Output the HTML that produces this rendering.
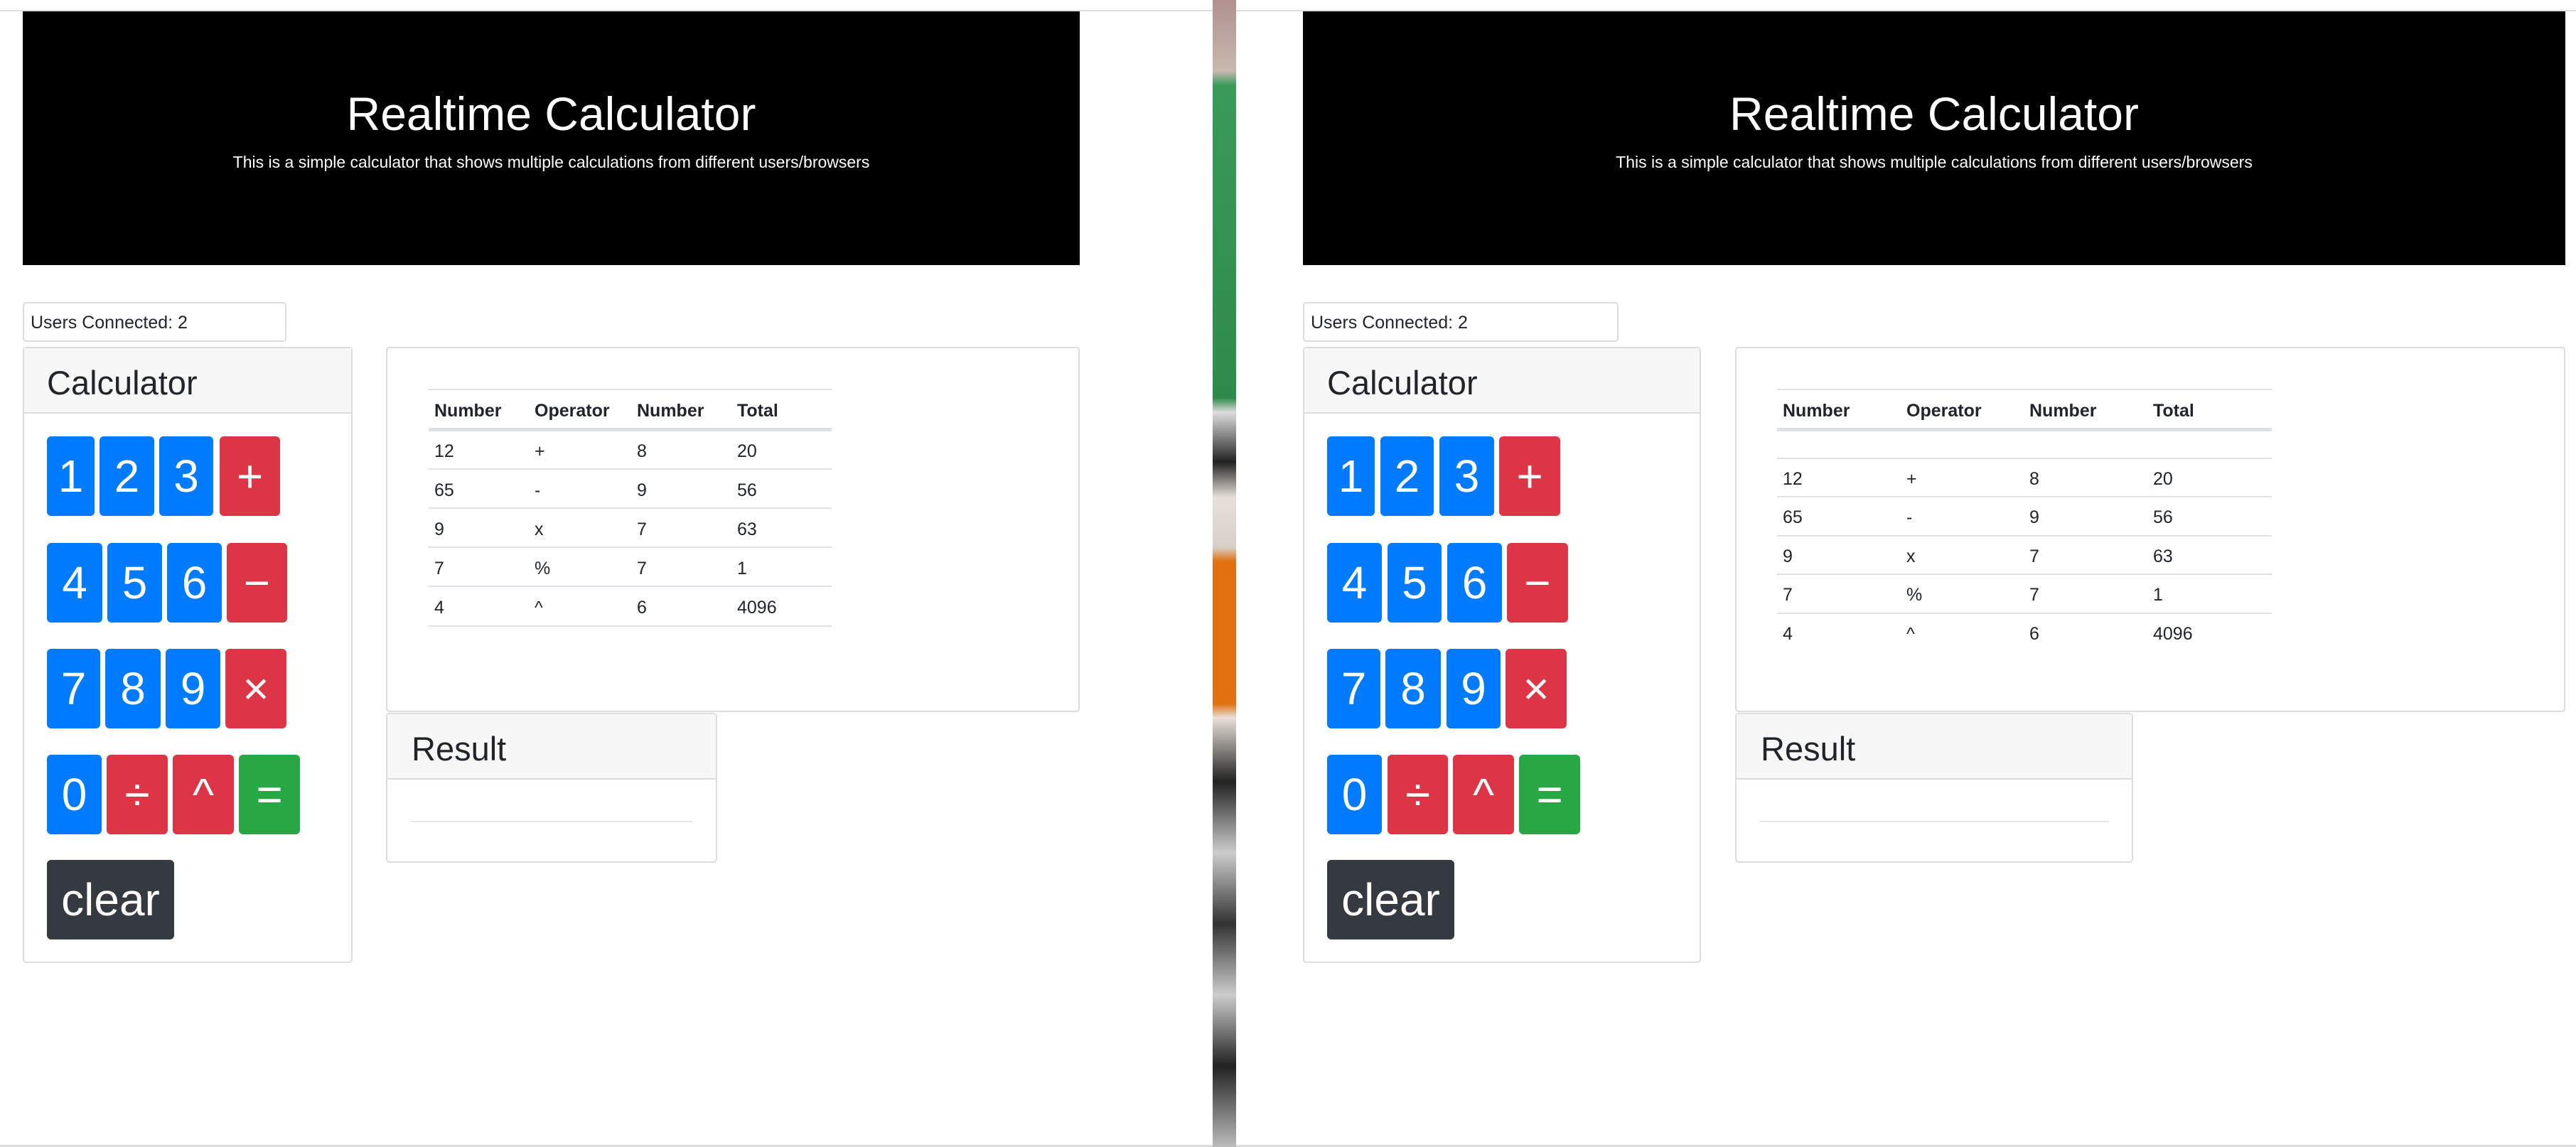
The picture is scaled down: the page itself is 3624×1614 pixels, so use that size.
<!DOCTYPE html>
<html><head><meta charset="utf-8"><style>
*{box-sizing:border-box;margin:0;padding:0}
body{width:3624px;height:1614px;position:relative;overflow:hidden;background:#fff;font-family:"Liberation Sans",sans-serif;color:#212529}
.a{position:absolute}
.jb{position:absolute;top:16px;height:357px;background:#000;color:#fff;text-align:center}
.jb h1{position:absolute;left:0;right:0;top:104px;font-size:66px;font-weight:normal;line-height:80px}
.jb p{position:absolute;left:0;right:0;top:196px;font-size:23px;line-height:32px}
.uc{position:absolute;top:425px;height:56px;border:2px solid #ddd;border-radius:5px;font-size:25px;line-height:54px;padding-left:9px}
.card{position:absolute;border:2px solid #dcdcdc;border-radius:5px;background:#fff}
.hd{position:absolute;left:0;right:0;top:0;height:92px;background:#f7f7f7;border-bottom:2px solid #dcdcdc;font-size:47px;line-height:98px}
.b{position:absolute;color:#fff;border-radius:6px;text-align:center;font-size:64px;line-height:112px;height:112px}
.bl{background:#007bff}.rd{background:#dc3545}.gr{background:#28a745}.dk{background:#343a40}
.ln{position:absolute;height:2px;background:#dee2e6}
.t{position:absolute;font-size:25px;line-height:30px;margin-top:2px}
.th{font-weight:bold}
</style></head><body>
<div class="a" style="left:0;top:14px;width:1706px;height:2px;background:#ddd"></div>
<div class="a" style="left:1739px;top:14px;width:1885px;height:2px;background:#ddd"></div>
<div class="a" style="left:0;top:1611px;width:3624px;height:3px;background:#ddd"></div>
<div class="a" style="left:1706px;top:0;width:33px;height:1614px;background:linear-gradient(#b09090 0px,#c8b8b0 100px,#3a9a5a 120px,#2e8a4a 560px,#ddd 580px,#222 650px,#e8e0d8 700px,#d8d0c8 770px,#e07010 790px,#e07010 990px,#e8e0d8 1010px,#222 1100px,#ccc 1200px,#333 1300px,#ccc 1400px,#222 1500px,#bbb 1614px)"></div>

<!-- LEFT -->
<div class="jb" style="left:32px;width:1487px"><h1>Realtime Calculator</h1><p>This is a simple calculator that shows multiple calculations from different users/browsers</p></div>
<div class="uc" style="left:32px;width:371px">Users Connected: 2</div>
<div class="card" style="left:32px;top:488px;width:464px;height:867px"><div class="hd" style="padding-left:32px">Calculator</div></div>
<div class="b bl" style="left:66px;top:614px;width:67px">1</div>
<div class="b bl" style="left:140px;top:614px;width:77px">2</div>
<div class="b bl" style="left:224px;top:614px;width:76px">3</div>
<div class="b rd" style="left:309px;top:614px;width:85px">+</div>
<div class="b bl" style="left:66px;top:764px;width:78px">4</div>
<div class="b bl" style="left:151px;top:764px;width:77px">5</div>
<div class="b bl" style="left:235px;top:764px;width:77px">6</div>
<div class="b rd" style="left:319px;top:764px;width:85px">−</div>
<div class="b bl" style="left:66px;top:913px;width:75px">7</div>
<div class="b bl" style="left:148px;top:913px;width:78px">8</div>
<div class="b bl" style="left:233px;top:913px;width:77px">9</div>
<div class="b rd" style="left:317px;top:913px;width:86px">×</div>
<div class="b bl" style="left:66px;top:1062px;width:77px">0</div>
<div class="b rd" style="left:150px;top:1062px;width:86px">÷</div>
<div class="b rd" style="left:243px;top:1062px;width:86px">^</div>
<div class="b gr" style="left:336px;top:1062px;width:86px">=</div>
<div class="b dk" style="left:66px;top:1210px;width:179px">clear</div>

<div class="card" style="left:543px;top:488px;width:976px;height:514px"></div>
<div class="ln" style="left:603px;top:547px;width:567px"></div>
<div class="ln" style="left:603px;top:602px;width:567px;height:5px"></div>
<div class="ln" style="left:603px;top:659px;width:567px"></div>
<div class="ln" style="left:603px;top:714px;width:567px"></div>
<div class="ln" style="left:603px;top:769px;width:567px"></div>
<div class="ln" style="left:603px;top:824px;width:567px"></div>
<div class="ln" style="left:603px;top:880px;width:567px"></div>
<div class="t th" style="left:611px;top:561px">Number</div><div class="t th" style="left:752px;top:561px">Operator</div><div class="t th" style="left:896px;top:561px">Number</div><div class="t th" style="left:1037px;top:561px">Total</div>
<div class="t" style="left:611px;top:618px">12</div><div class="t" style="left:752px;top:618px">+</div><div class="t" style="left:896px;top:618px">8</div><div class="t" style="left:1037px;top:618px">20</div>
<div class="t" style="left:611px;top:673px">65</div><div class="t" style="left:752px;top:673px">-</div><div class="t" style="left:896px;top:673px">9</div><div class="t" style="left:1037px;top:673px">56</div>
<div class="t" style="left:611px;top:728px">9</div><div class="t" style="left:752px;top:728px">x</div><div class="t" style="left:896px;top:728px">7</div><div class="t" style="left:1037px;top:728px">63</div>
<div class="t" style="left:611px;top:783px">7</div><div class="t" style="left:752px;top:783px">%</div><div class="t" style="left:896px;top:783px">7</div><div class="t" style="left:1037px;top:783px">1</div>
<div class="t" style="left:611px;top:838px">4</div><div class="t" style="left:752px;top:838px">^</div><div class="t" style="left:896px;top:838px">6</div><div class="t" style="left:1037px;top:838px">4096</div>

<div class="card" style="left:543px;top:1003px;width:466px;height:211px"><div class="hd" style="padding-left:34px">Result</div></div>
<div class="ln" style="left:578px;top:1155px;width:396px;background:#e8e8e8"></div>

<!-- RIGHT -->
<div class="jb" style="left:1833px;width:1776px"><h1>Realtime Calculator</h1><p>This is a simple calculator that shows multiple calculations from different users/browsers</p></div>
<div class="uc" style="left:1833px;width:444px">Users Connected: 2</div>
<div class="card" style="left:1833px;top:488px;width:560px;height:867px"><div class="hd" style="padding-left:32px">Calculator</div></div>
<div class="b bl" style="left:1867px;top:614px;width:67px">1</div>
<div class="b bl" style="left:1942px;top:614px;width:75px">2</div>
<div class="b bl" style="left:2025px;top:614px;width:77px">3</div>
<div class="b rd" style="left:2109px;top:614px;width:86px">+</div>
<div class="b bl" style="left:1867px;top:764px;width:77px">4</div>
<div class="b bl" style="left:1952px;top:764px;width:76px">5</div>
<div class="b bl" style="left:2036px;top:764px;width:77px">6</div>
<div class="b rd" style="left:2120px;top:764px;width:86px">−</div>
<div class="b bl" style="left:1867px;top:913px;width:75px">7</div>
<div class="b bl" style="left:1949px;top:913px;width:78px">8</div>
<div class="b bl" style="left:2035px;top:913px;width:76px">9</div>
<div class="b rd" style="left:2118px;top:913px;width:86px">×</div>
<div class="b bl" style="left:1867px;top:1062px;width:77px">0</div>
<div class="b rd" style="left:1952px;top:1062px;width:85px">÷</div>
<div class="b rd" style="left:2044px;top:1062px;width:86px">^</div>
<div class="b gr" style="left:2137px;top:1062px;width:86px">=</div>
<div class="b dk" style="left:1867px;top:1210px;width:179px">clear</div>

<div class="card" style="left:2441px;top:488px;width:1168px;height:514px"></div>
<div class="ln" style="left:2500px;top:547px;width:696px"></div>
<div class="ln" style="left:2500px;top:602px;width:696px;height:5px"></div>
<div class="ln" style="left:2500px;top:644px;width:696px"></div>
<div class="ln" style="left:2500px;top:698px;width:696px"></div>
<div class="ln" style="left:2500px;top:753px;width:696px"></div>
<div class="ln" style="left:2500px;top:807px;width:696px"></div>
<div class="ln" style="left:2500px;top:862px;width:696px"></div>
<div class="t th" style="left:2508px;top:561px">Number</div><div class="t th" style="left:2682px;top:561px">Operator</div><div class="t th" style="left:2855px;top:561px">Number</div><div class="t th" style="left:3029px;top:561px">Total</div>
<div class="t" style="left:2508px;top:657px">12</div><div class="t" style="left:2682px;top:657px">+</div><div class="t" style="left:2855px;top:657px">8</div><div class="t" style="left:3029px;top:657px">20</div>
<div class="t" style="left:2508px;top:711px">65</div><div class="t" style="left:2682px;top:711px">-</div><div class="t" style="left:2855px;top:711px">9</div><div class="t" style="left:3029px;top:711px">56</div>
<div class="t" style="left:2508px;top:766px">9</div><div class="t" style="left:2682px;top:766px">x</div><div class="t" style="left:2855px;top:766px">7</div><div class="t" style="left:3029px;top:766px">63</div>
<div class="t" style="left:2508px;top:820px">7</div><div class="t" style="left:2682px;top:820px">%</div><div class="t" style="left:2855px;top:820px">7</div><div class="t" style="left:3029px;top:820px">1</div>
<div class="t" style="left:2508px;top:875px">4</div><div class="t" style="left:2682px;top:875px">^</div><div class="t" style="left:2855px;top:875px">6</div><div class="t" style="left:3029px;top:875px">4096</div>

<div class="card" style="left:2441px;top:1003px;width:560px;height:211px"><div class="hd" style="padding-left:34px">Result</div></div>
<div class="ln" style="left:2475px;top:1155px;width:492px;background:#e8e8e8"></div>
</body></html>
